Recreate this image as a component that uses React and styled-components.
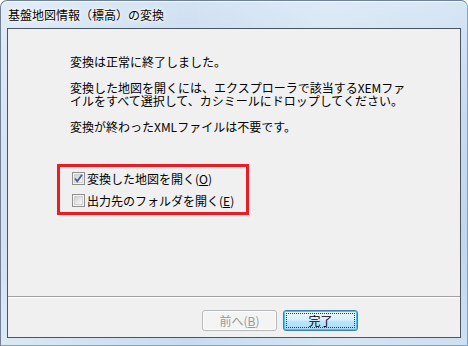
import React from 'react';
import styled, { createGlobalStyle } from 'styled-components';

const GlobalStyle = createGlobalStyle`
  html, body {
    margin: 0;
    padding: 0;
    background: #ffffff;
  }
  body {
    font-family: "Noto Sans CJK JP", "Liberation Sans", sans-serif;
  }
`;

// Glass window frame
const Window = styled.div`
  width: 468px;
  height: 346px;
  box-sizing: border-box;
  display: flex;
  flex-direction: column;
  border-radius: 7px 7px 0 0;
  border: 1px solid #6f8196;
  border-bottom-color: #2cc6f2;
  border-right-color: #45b8e4;
  background:
    linear-gradient(90deg, rgba(255,255,255,0.35), rgba(255,255,255,0) 40%, rgba(255,255,255,0.25) 70%, rgba(255,255,255,0.1)),
    linear-gradient(180deg, #d3e3f3 0%, #c4d7ec 30%, #bcd1e8 70%, #c9dcef 100%);
  box-shadow: inset 0 1px 0 rgba(255,255,255,0.8);
  overflow: hidden;
`;

const TitleBar = styled.div`
  height: 27px;
  flex-shrink: 0;
  display: flex;
  align-items: flex-start;
  padding: 6px 0 0 7px;
  box-sizing: border-box;
`;

const Title = styled.span`
  font-size: 12px;
  line-height: 15px;
  color: #000;
  text-shadow: 0 0 6px #ffffff, 0 0 3px #ffffff, 0 0 1px #ffffff;
`;

const Client = styled.div`
  flex: 1;
  margin: 0 6px 7px 6px;
  border: 1px solid #4a5562;
  background: #f0f0f0;
  display: flex;
  flex-direction: column;
  min-height: 0;
`;

const Body = styled.div`
  flex: 1;
  padding: 26px 0 0 62px;
  display: flex;
  flex-direction: column;
  align-items: flex-start;
`;

const Para = styled.p`
  margin: 0 0 13px 0;
  font-size: 12px;
  line-height: 13px;
  color: #000;
  white-space: pre-line;
`;

const Highlight = styled.div`
  margin: 18px 0 0 -13px;
  width: 192px;
  height: 51px;
  box-sizing: border-box;
  border: 3px solid #ed1c24;
  padding: 5px 0 0 12px;
  display: flex;
  flex-direction: column;
  gap: 9px;
`;

const CheckRow = styled.label`
  display: flex;
  align-items: center;
  height: 13px;
  font-size: 12px;
  line-height: 13px;
  color: #000;
`;

const Box = styled.span`
  width: 13px;
  height: 13px;
  box-sizing: border-box;
  border: 1px solid #8f8f8f;
  background: #f4f4f4;
  margin-right: 2px;
  position: relative;
  flex-shrink: 0;
  &::before {
    content: '';
    position: absolute;
    inset: 1px;
    border: 1px solid #d0d0d0;
    background: linear-gradient(135deg, #cfcfcf, #f3f3f3 80%);
  }
  svg {
    position: absolute;
    left: 1px;
    top: 1px;
  }
`;

const U = styled.span`
  text-decoration: underline;
  text-underline-offset: 1px;
`;

const Separator = styled.div`
  height: 1px;
  background: #a0a0a0;
  border-bottom: 1px solid #ffffff;
  flex-shrink: 0;
`;

const ButtonRow = styled.div`
  height: 39px;
  flex-shrink: 0;
  box-sizing: border-box;
  padding: 12px 102px 0 0;
  display: flex;
  justify-content: flex-end;
  align-items: flex-start;
  gap: 6px;
`;

const Button = styled.button`
  width: 75px;
  height: 21px;
  box-sizing: border-box;
  padding: 0;
  font-family: "Noto Sans CJK JP", "Liberation Sans", sans-serif;
  font-size: 12px;
  line-height: 13px;
  border-radius: 3px;
  position: relative;
  color: ${({ disabled }) => (disabled ? '#9a9a9a' : '#000')};
  border: 1px solid ${({ primary, disabled }) => (disabled ? '#b5b9bc' : primary ? '#3c7fb1' : '#707070')};
  background: ${({ primary, disabled }) =>
    disabled
      ? '#f4f4f4'
      : primary
      ? 'linear-gradient(180deg, #eaf6fd 0%, #d9f0fc 48%, #bee6fd 52%, #a7d9f5 100%)'
      : 'linear-gradient(180deg, #f2f2f2 0%, #ebebeb 48%, #dddddd 52%, #cfcfcf 100%)'};
  box-shadow: ${({ primary }) => (primary ? 'inset 0 0 0 1px #48c1f0' : 'inset 0 0 0 1px #fcfcfc')};
  &::after {
    content: '';
    display: ${({ primary }) => (primary ? 'block' : 'none')};
    position: absolute;
    inset: 2px;
    border: 1px dotted #3a3a3a;
    border-radius: 1px;
  }
`;

const Check = () => (
  <svg width="9" height="9" viewBox="0 0 9 9" aria-hidden="true">
    <path d="M1 4.5 L3.3 7.2 L8 0.8" stroke="#4a5a9a" strokeWidth="1.8" fill="none" />
  </svg>
);

export default function App() {
  return (
    <>
      <GlobalStyle />
      <Window>
        <TitleBar>
          <Title>基盤地図情報（標高）の変換</Title>
        </TitleBar>
        <Client>
          <Body>
            <Para>変換は正常に終了しました。</Para>
            <Para>
              {'変換した地図を開くには、エクスプローラで該当するXEMファ\nイルをすべて選択して、カシミールにドロップしてください。'}
            </Para>
            <Para>変換が終わったXMLファイルは不要です。</Para>
            <Highlight>
              <CheckRow>
                <Box>
                  <Check />
                </Box>
                変換した地図を開く(<U>O</U>)
              </CheckRow>
              <CheckRow>
                <Box />
                出力先のフォルダを開く(<U>E</U>)
              </CheckRow>
            </Highlight>
          </Body>
          <Separator />
          <ButtonRow>
            <Button disabled>
              前へ(<U>B</U>)
            </Button>
            <Button primary>完了</Button>
          </ButtonRow>
        </Client>
      </Window>
    </>
  );
}
